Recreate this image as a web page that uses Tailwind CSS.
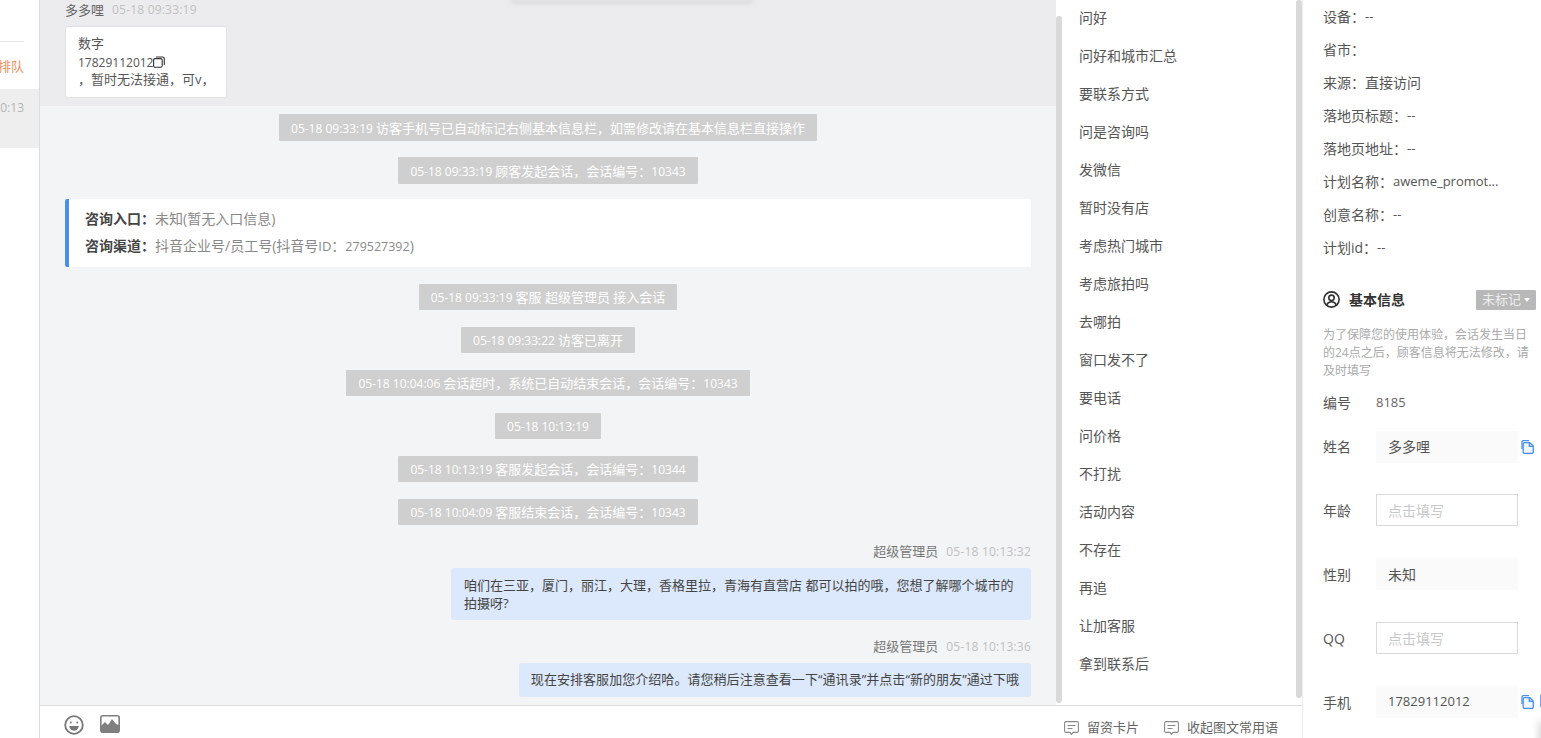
<!DOCTYPE html>
<html lang="zh-CN">
  <head>
    <meta charset="UTF-8" />
    <title>会话</title>
    <script src="https://cdn.jsdelivr.net/npm/@tailwindcss/browser@4"></script>
  </head>
  <body class="font-['Open_Sans','Noto_Sans_CJK_SC',sans-serif] text-[13px] text-[#555] bg-white">
    <div class="flex h-[738px] w-[1541px] overflow-hidden">
      <!-- session list -->
      <aside class="w-[40px] shrink-0 bg-white border-r border-[#dcdcdc] h-full">
        <div class="mt-[41px] w-[24px] border-t border-[#e8e8e8]"></div>
        <div class="h-[47px] pt-[2px] flex items-center justify-end pr-[15px] text-[#ee8f5e] whitespace-nowrap overflow-hidden">排队</div>
        <div class="h-[59px] bg-[#eeeeee] text-[12px] text-[#b5b5b5] overflow-hidden flex justify-end pr-[15px] pt-[10px] whitespace-nowrap">10:13</div>
      </aside>

      <div class="w-[1262px] shrink-0 h-full flex flex-col">
        <div class="h-[705px] shrink-0 flex">
          <!-- chat -->
          <main class="w-[1016px] shrink-0 h-full relative bg-[#f3f4f6]">
            <div class="absolute top-[-6px] left-[472px] w-[240px] h-[8px] shadow-[0_1px_6px_rgba(0,0,0,0.1)] bg-[#e2e2e4]"></div>
            <div class="h-[106px] bg-[#ececee] pl-[25px] pt-[1px]">
              <div class="h-[18px] flex items-center gap-2 leading-[18px]">
                <span class="text-[#666]">多多哩</span>
                <span class="text-[12px] tracking-[0.2px] text-[#c0c0c0]">05-18 09:33:19</span>
              </div>
              <div class="mt-[7px] w-[162px] h-[72px] bg-white border border-[#e2e2e2] rounded-[3px] px-[12px] py-[8px] leading-[18px] text-[#555] whitespace-nowrap">
                <div class="-mt-px h-[19px]">数字</div>
                <div class="h-[18px] pt-[2px] flex items-center text-[12px]">17829112012
                  <svg class="w-[12px] h-[12px] -mt-[2px]" viewBox="0 0 12 12" fill="none" stroke="#333" stroke-width="1.100"><rect x="0.600" y="2.600" width="8.600" height="8.600" rx="1.500"/><path d="M3 1h6.500A1.700 1.700 0 0 1 11.300 2.700V9"/></svg>
                </div>
                <div class="-mt-px">，暂时无法接通，可v，</div>
              </div>
            </div>

            <div class="px-[25px] pt-[8px] flex flex-col items-center">
              <div class="h-[27px] pt-[2px] px-[12px] flex items-center bg-[#cfcfcf] text-white rounded-[1px]"><span class="text-[12px] mr-[3px]">05-18 09:33:19</span>访客手机号已自动标记右侧基本信息栏，如需修改请在基本信息栏直接操作</div>
              <div class="mt-[16px] h-[27px] pt-[2px] px-[12px] flex items-center bg-[#cfcfcf] text-white rounded-[1px]"><span class="text-[12px] mr-[3px]">05-18 09:33:19</span>顾客发起会话，会话编号：<span class="text-[12px]">10343</span></div>

              <div class="mt-[15px] w-full h-[68px] bg-white border-l-[4px] border-[#4f8cf0] rounded-l-[2px] pl-[16px] pt-[6px] leading-[27px] text-[14px]">
                <div><span class="font-bold text-[#444]">咨询入口：</span><span class="text-[#8a8a8a]">未知(暂无入口信息)</span></div>
                <div><span class="font-bold text-[#444]">咨询渠道：</span><span class="text-[#8a8a8a]">抖音企业号/员工号(抖音号<span class="text-[13px]">ID</span>：<span class="text-[12.500px]">279527392</span>)</span></div>
              </div>

              <div class="mt-[17px] h-[26px] pt-px px-[12px] flex items-center bg-[#cfcfcf] text-white rounded-[1px]"><span class="text-[12px] mr-[3px]">05-18 09:33:19</span>客服 超级管理员 接入会话</div>
              <div class="mt-[17px] h-[26px] pt-px px-[12px] flex items-center bg-[#cfcfcf] text-white rounded-[1px]"><span class="text-[12px] mr-[3px]">05-18 09:33:22</span>访客已离开</div>
              <div class="mt-[17px] h-[26px] pt-px px-[12px] flex items-center bg-[#cfcfcf] text-white rounded-[1px]"><span class="text-[12px] mr-[3px]">05-18 10:04:06</span>会话超时，系统已自动结束会话，会话编号：<span class="text-[12px]">10343</span></div>
              <div class="mt-[17px] h-[26px] pt-px px-[12px] flex items-center bg-[#cfcfcf] text-white rounded-[1px]"><span class="text-[12px]">05-18 10:13:19</span></div>
              <div class="mt-[17px] h-[26px] pt-px px-[12px] flex items-center bg-[#cfcfcf] text-white rounded-[1px]"><span class="text-[12px] mr-[3px]">05-18 10:13:19</span>客服发起会话，会话编号：<span class="text-[12px]">10344</span></div>
              <div class="mt-[17px] h-[26px] pt-px px-[12px] flex items-center bg-[#cfcfcf] text-white rounded-[1px]"><span class="text-[12px] mr-[3px]">05-18 10:04:09</span>客服结束会话，会话编号：<span class="text-[12px]">10343</span></div>

              <div class="self-end mt-[18px] h-[18px] flex items-center gap-2">
                <span class="text-[#777]">超级管理员</span>
                <span class="text-[12px] tracking-[0.2px] text-[#c0c0c0]">05-18 10:13:32</span>
              </div>
              <div class="self-end mt-[7px] w-[580px] h-[52px] bg-[#dce8fb] rounded-[3px] px-[13px] py-[8px] leading-[18px] text-[#444]">咱们在三亚，厦门，丽江，大理，香格里拉，青海有直营店 都可以拍的哦，您想了解哪个城市的拍摄呀?</div>

              <div class="self-end mt-[18px] h-[18px] flex items-center gap-2">
                <span class="text-[#777]">超级管理员</span>
                <span class="text-[12px] tracking-[0.2px] text-[#c0c0c0]">05-18 10:13:36</span>
              </div>
              <div class="self-end mt-[7px] h-[34px] bg-[#dce8fb] rounded-[3px] px-[12px] flex items-center tracking-[0.05px] text-[#444]">现在安排客服加您介绍哈。请您稍后注意查看一下“通讯录”并点击“新的朋友”通过下哦</div>
            </div>
          </main>

          <!-- phrases -->
          <section class="flex-1 min-w-0 h-full flex">
            <div class="w-[6px] shrink-0 pt-[16px] pb-[2px]"><div class="h-full bg-[#d9d9d9] rounded-[3px]"></div></div>
            <ul class="flex-1 min-w-0 pl-[17px] text-[14px] text-[#555] leading-[36px]">
              <li class="h-[38px]">问好</li>
              <li class="h-[38px]">问好和城市汇总</li>
              <li class="h-[38px]">要联系方式</li>
              <li class="h-[38px]">问是咨询吗</li>
              <li class="h-[38px]">发微信</li>
              <li class="h-[38px]">暂时没有店</li>
              <li class="h-[38px]">考虑热门城市</li>
              <li class="h-[38px]">考虑旅拍吗</li>
              <li class="h-[38px]">去哪拍</li>
              <li class="h-[38px]">窗口发不了</li>
              <li class="h-[38px]">要电话</li>
              <li class="h-[38px]">问价格</li>
              <li class="h-[38px]">不打扰</li>
              <li class="h-[38px]">活动内容</li>
              <li class="h-[38px]">不存在</li>
              <li class="h-[38px]">再追</li>
              <li class="h-[38px]">让加客服</li>
              <li class="h-[38px]">拿到联系后</li>
            </ul>
            <div class="w-[6px] shrink-0 pb-[7px]"><div class="h-full bg-[#d9d9d9] rounded-[3px]"></div></div>
          </section>
        </div>

        <!-- input toolbar -->
        <div class="flex-1 min-h-0 bg-white border-t border-[#dcdcdc] flex justify-between pl-[24px] pr-[24px]">
          <div class="flex items-start gap-[16px] pt-[9px]">
            <svg class="w-[20px] h-[20px]" viewBox="0 0 20 20" fill="none"><circle cx="10" cy="10" r="8.800" stroke="#777" stroke-width="1.800"/><circle cx="6.800" cy="7.500" r="1" fill="#777"/><circle cx="13.200" cy="7.500" r="1" fill="#777"/><path d="M5.300 11h9.400a4.700 4.700 0 0 1-9.400 0z" fill="#777"/></svg>
            <svg class="w-[20px] h-[18px]" viewBox="0 0 20 18" fill="none"><rect x="0.800" y="0.800" width="18.400" height="16.400" rx="2" stroke="#808080" stroke-width="1.600"/><path d="M1 17V11l4-4 3 3 4-6 4 5 3 1v7z" fill="#808080"/></svg>
          </div>
          <div class="flex items-start gap-[25px] pt-[14px]">
            <div class="flex items-center gap-[8px] h-[16px]">
              <svg class="w-[15px] h-[14px]" viewBox="0 0 15 14" fill="none" stroke="#888" stroke-width="1.100"><path d="M2 .6h11A1.400 1.400 0 0 1 14.400 2v8a1.400 1.400 0 0 1-1.400 1.400H9l-1.500 2-1.500-2H2A1.400 1.400 0 0 1 .6 10V2A1.400 1.400 0 0 1 2 .6z"/><path d="M3.500 4.500h8M3.500 7.500h5"/></svg>
              <span class="text-[#666]">留资卡片</span>
            </div>
            <div class="flex items-center gap-[8px] h-[16px]">
              <svg class="w-[15px] h-[14px]" viewBox="0 0 15 14" fill="none" stroke="#888" stroke-width="1.100"><path d="M2 .6h11A1.400 1.400 0 0 1 14.400 2v8a1.400 1.400 0 0 1-1.400 1.400H9l-1.500 2-1.500-2H2A1.400 1.400 0 0 1 .6 10V2A1.400 1.400 0 0 1 2 .6z"/><path d="M3.500 4.500h8M3.500 7.500h5"/></svg>
              <span class="text-[#666]">收起图文常用语</span>
            </div>
          </div>
        </div>
      </div>

      <!-- customer info -->
      <aside class="relative flex-1 min-w-0 h-full border-l border-[#eeeeee] pl-[20px] text-[14px] text-[#555] overflow-hidden">
        <div class="h-[33px] flex items-center">设备：<span class="text-[13px]">--</span></div>
        <div class="h-[33px] flex items-center">省市：</div>
        <div class="h-[33px] flex items-center">来源：<span>直接访问</span></div>
        <div class="h-[33px] flex items-center">落地页标题：<span class="text-[13px]">--</span></div>
        <div class="h-[33px] flex items-center">落地页地址：<span class="text-[13px]">--</span></div>
        <div class="h-[33px] flex items-center">计划名称：<span class="text-[13px]">aweme_promot...</span></div>
        <div class="h-[33px] flex items-center">创意名称：<span class="text-[13px]">--</span></div>
        <div class="h-[33px] flex items-center">计划id：<span class="text-[13px]">--</span></div>

        <div class="mt-[26px] h-[20px] flex items-center justify-between pr-[5px]">
          <div class="flex items-center gap-[9px] font-bold text-[#333] -mt-[2px]">
            <svg class="w-[17px] h-[17px]" viewBox="0 0 17 17" fill="none" stroke="#333" stroke-width="1.600"><circle cx="8.500" cy="8.500" r="7.600"/><circle cx="8.500" cy="6.800" r="2.700"/><path d="M3.800 14c.8-2.200 2.600-3.200 4.700-3.200s3.900 1 4.700 3.200"/></svg>
            基本信息
          </div>
          <div class="w-[60px] h-[20px] bg-[#b8b8b8] text-[#eee] text-[13px] flex items-center justify-center gap-[3px] rounded-[1px]">未标记<span class="w-0 h-0 border-x-[3px] border-x-transparent border-t-[4px] border-t-white"></span></div>
        </div>
        <p class="mt-[16px] w-[214px] text-[12px] leading-[18px] text-[#aaa]">为了保障您的使用体验，会话发生当日的24点之后，顾客信息将无法修改，请及时填写</p>

        <div class="mt-[10px] h-[25px] flex items-center"><span class="w-[53px]">编号</span><span class="text-[13px] text-[#666]">8185</span></div>

        <div class="h-[63px] flex items-center">
          <span class="w-[53px]">姓名</span>
          <div class="w-[142px] h-[32px] bg-[#fafafa] pl-[12px] flex items-center">多多哩</div>
          <svg class="ml-[3px] w-[13px] h-[14px]" viewBox="0 0 13 14" stroke="#4a90e8" stroke-width="1.300"><path d="M1 9V2A1.200 1.200 0 0 1 2.200.7H8" fill="none"/><path d="M3.400 2.700h5.300l3.600 3.400v6a1.200 1.200 0 0 1-1.200 1.200H3.400A1.200 1.200 0 0 1 2.200 12.100V3.900a1.200 1.200 0 0 1 1.200-1.200z" fill="#eef5fe"/><path d="M8.300 2.900v3.500h3.800" fill="#bcd5f7"/></svg>
        </div>
        <div class="h-[64px] flex items-center">
          <span class="w-[53px]">年龄</span>
          <div class="w-[142px] h-[32px] border border-[#d9d9d9] pl-[11px] flex items-center text-[#c8c8c8]">点击填写</div>
        </div>
        <div class="h-[64px] flex items-center">
          <span class="w-[53px]">性别</span>
          <div class="w-[142px] h-[32px] bg-[#fafafa] pl-[12px] flex items-center">未知</div>
        </div>
        <div class="h-[64px] flex items-center">
          <span class="w-[53px]">QQ</span>
          <div class="w-[142px] h-[32px] border border-[#d9d9d9] pl-[11px] flex items-center text-[#c8c8c8]">点击填写</div>
        </div>
        <div class="h-[64px] flex items-center">
          <span class="w-[53px]">手机</span>
          <div class="w-[142px] h-[32px] bg-[#fafafa] pl-[12px] flex items-center text-[13px]">17829112012</div>
          <svg class="ml-[3px] w-[13px] h-[14px]" viewBox="0 0 13 14" stroke="#4a90e8" stroke-width="1.300"><path d="M1 9V2A1.200 1.200 0 0 1 2.200.7H8" fill="none"/><path d="M3.400 2.700h5.300l3.600 3.400v6a1.200 1.200 0 0 1-1.200 1.200H3.400A1.200 1.200 0 0 1 2.200 12.100V3.900a1.200 1.200 0 0 1 1.200-1.200z" fill="#eef5fe"/><path d="M8.300 2.900v3.500h3.800" fill="#bcd5f7"/></svg>
        </div>

        <!-- edge of floating widgets, clipped by the window -->
        <div class="absolute left-[237px] top-[694px] w-[6px] h-[14px] rounded-[2px] bg-[#6fa3f0]"></div>
        <div class="absolute left-[238px] top-[722px] w-[6px] h-[24px] bg-[#3d82f0] shadow-[0_0_10px_rgba(0,0,0,0.3)]"></div>
      </aside>
    </div>
  </body>
</html>
